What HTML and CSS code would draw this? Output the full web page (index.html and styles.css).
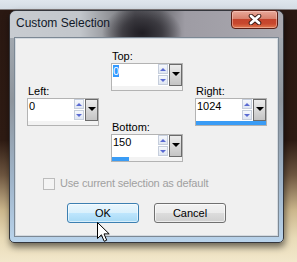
FILE: index.html
```html
<!DOCTYPE html>
<html>
<head>
<meta charset="utf-8">
<title>Custom Selection</title>
<link rel="stylesheet" href="styles.css">
</head>
<body>
<div class="desktop">
  <div class="window">
    <div class="titlebar">
      <div class="title">Custom Selection</div>
      <div class="close">
        <svg width="14" height="11" viewBox="0 0 14 11">
          <path d="M3 2 L11 9 M11 2 L3 9" stroke="#3a1a14" stroke-width="4.6" stroke-linecap="round"/>
          <path d="M3 2 L11 9 M11 2 L3 9" stroke="#ffffff" stroke-width="2.8" stroke-linecap="round"/>
        </svg>
      </div>
    </div>
    <div class="client">
      <div class="fields">
        <div class="col side">
          <div class="label">Left:</div>
          <div class="spin">
            <div class="spin-row">
              <div class="edit">0</div>
              <div class="arrows"><span class="arrow up"></span><span class="arrow down"></span></div>
              <div class="drop"></div>
            </div>
            <div class="strip"></div>
          </div>
        </div>
        <div class="col center">
          <div class="group">
            <div class="label">Top:</div>
            <div class="spin">
              <div class="spin-row">
                <div class="edit"><span class="sel">0</span></div>
                <div class="arrows"><span class="arrow up"></span><span class="arrow down"></span></div>
                <div class="drop"></div>
              </div>
              <div class="strip"></div>
            </div>
          </div>
          <div class="group">
            <div class="label">Bottom:</div>
            <div class="spin">
              <div class="spin-row">
                <div class="edit">150</div>
                <div class="arrows"><span class="arrow up"></span><span class="arrow down"></span></div>
                <div class="drop"></div>
              </div>
              <div class="strip"><div class="bar" style="width:17px"></div></div>
            </div>
          </div>
        </div>
        <div class="col side">
          <div class="label">Right:</div>
          <div class="spin">
            <div class="spin-row">
              <div class="edit">1024</div>
              <div class="arrows"><span class="arrow up"></span><span class="arrow down"></span></div>
              <div class="drop"></div>
            </div>
            <div class="strip"><div class="bar" style="width:100%"></div></div>
          </div>
        </div>
      </div>
      <div class="option">
        <span class="checkbox"></span>
        <span class="option-text">Use current selection as default</span>
      </div>
      <div class="buttons">
        <button class="btn ok">OK</button>
        <button class="btn cancel">Cancel</button>
      </div>
    </div>
  </div>
  <svg class="cursor" width="14" height="21" viewBox="0 0 14 21">
    <path d="M0.5 0.5 L0.5 16.5 L4.4 12.8 L7.2 19.3 L9.7 18.2 L7 11.9 L12.2 11.9 Z" fill="#ffffff" stroke="#000000" stroke-width="1" stroke-linejoin="miter"/>
  </svg>
</div>
</body>
</html>
```

FILE: styles.css
```css
* { box-sizing: border-box; }
html, body { margin: 0; padding: 0; }
body {
  width: 297px;
  height: 262px;
  overflow: hidden;
  font-family: "Liberation Sans", Arial, sans-serif;
}
.desktop {
  position: relative;
  width: 297px;
  height: 262px;
  padding: 10px 0 0 9px;
  background: linear-gradient(to bottom,
    #dfe6ed 0, #d4dce4 9px, #2a1812 10px, #2e1b13 140px,
    #6e5640 175px, #cbb68c 210px, #e9dbb8 238px, #f2e7cb 262px);
}
.window {
  width: 275px;
  height: 233px;
  border: 1px solid #34363c;
  border-radius: 7px 7px 5px 5px;
  background: linear-gradient(to bottom, #aab0b7 0, #8e959d 90px, #a0b5ca 170px, #b9d3eb 231px);
  box-shadow: 1px 4px 7px rgba(0, 0, 0, 0.55);
  display: flex;
  flex-direction: column;
}
.titlebar {
  height: 27px;
  flex: none;
  display: flex;
  justify-content: space-between;
  align-items: flex-start;
  border-radius: 6px 6px 0 0;
  background:
    radial-gradient(ellipse 40px 28px at 132px 22px, rgba(28, 26, 32, 0.95) 0, rgba(40, 38, 44, 0.7) 50%, rgba(60, 60, 66, 0) 100%),
    linear-gradient(to right, #c8ccd1 0, #c2c6cb 70px, #8a8b90 105px, #5a5a60 125px, #6a6a70 150px, #9e9ca4 175px, #aaa9b0 273px);
}
.title {
  padding: 5px 0 0 6px;
  font-size: 12px;
  line-height: 14px;
  color: #101828;
}
.close {
  width: 47px;
  height: 19px;
  margin: -1px 5px 0 0;
  border: 1px solid #5a1e14;
  border-radius: 3px 3px 4px 4px;
  background: linear-gradient(to bottom, #e9a99a 0, #d8826e 45%, #c4442c 50%, #c8482e 75%, #e07a50 100%);
  box-shadow: inset 0 0 0 1px rgba(255, 220, 210, 0.45);
  display: flex;
  align-items: center;
  justify-content: center;
}
.close svg { display: block; }
.client {
  margin: 0 5px;
  height: 198px;
  flex: none;
  background: #f0f0f0;
  border: 1px solid #d4dae0;
  box-shadow: 0 0 0 1px #7c8894;
}
.fields {
  display: grid;
  grid-template-columns: repeat(3, 72px);
  column-gap: 12px;
  padding: 11px 0 0 11px;
}
.col { display: flex; flex-direction: column; }
.col.side { padding-top: 35px; }
.col.center { gap: 30px; }
.group { display: flex; flex-direction: column; }
.label {
  font-size: 11px;
  line-height: 13px;
  color: #000;
  margin-left: 1px;
}
.spin {
  width: 72px;
  height: 28px;
  border: 1px solid #b3b3b3;
  background: #f3f3f3;
  display: flex;
  flex-direction: column;
}
.spin-row {
  height: 22px;
  display: flex;
  background: #ffffff;
}
.edit {
  flex: 1;
  padding: 1px 0 0 1px;
  font-size: 11px;
  line-height: 13px;
  color: #000;
}
.sel {
  background: #3399ff;
  color: #fff;
}
.arrows {
  width: 10px;
  height: 21px;
  display: flex;
  flex-direction: column;
  gap: 1px;
  margin-right: 1px;
}
.arrow {
  flex: 1;
  display: flex;
  align-items: center;
  justify-content: center;
  border: 1px solid #c6cedc;
  background: linear-gradient(to bottom, #f6f8fc, #dfe6f2);
}
.arrow::after {
  content: "";
  width: 0;
  height: 0;
  border-left: 3px solid transparent;
  border-right: 3px solid transparent;
}
.arrow.up::after { border-bottom: 3px solid #5a6ad2; }
.arrow.down::after { border-top: 3px solid #5a6ad2; }
.drop {
  width: 13px;
  height: 22px;
  border: 1px solid #6b6b6b;
  background: linear-gradient(to bottom, #ececec, #c4c4c4);
  display: flex;
  align-items: center;
  justify-content: center;
  padding-bottom: 3px;
}
.drop::after {
  content: "";
  width: 0;
  height: 0;
  border-left: 4px solid transparent;
  border-right: 4px solid transparent;
  border-top: 4px solid #000;
}
.strip {
  flex: 1;
  background: #f3f3f3;
}
.bar {
  height: 100%;
  background: #3a9cf5;
}
.option {
  display: flex;
  align-items: center;
  gap: 5px;
  margin: 15px 0 0 27px;
  font-size: 11px;
  line-height: 13px;
  color: #a0a0a0;
}
.option-text { letter-spacing: -0.18px; }
.checkbox {
  width: 12px;
  height: 12px;
  border: 1px solid #bcbcbc;
  background: #f4f4f4;
}
.buttons {
  display: flex;
  justify-content: center;
  gap: 15px;
  margin-top: 13px;
}
.btn {
  width: 72px;
  height: 20px;
  padding: 0;
  border-radius: 3px;
  font-family: "Liberation Sans", Arial, sans-serif;
  font-size: 11px;
  color: #000;
  display: flex;
  align-items: center;
  justify-content: center;
}
.btn.ok {
  border: 1px solid #3c7fb1;
  background: linear-gradient(to bottom, #eaf6fd 0, #d9f0fc 50%, #bee6fd 50%, #a7d9f5 100%);
  box-shadow: inset 0 0 0 1px rgba(255, 255, 255, 0.55);
}
.btn.cancel {
  border: 1px solid #707070;
  background: linear-gradient(to bottom, #f2f2f2 0, #ebebeb 50%, #dddddd 50%, #cfcfcf 100%);
  box-shadow: inset 0 0 0 1px rgba(255, 255, 255, 0.6);
}
.cursor {
  position: absolute;
  left: 97px;
  top: 222px;
  display: block;
}
```
